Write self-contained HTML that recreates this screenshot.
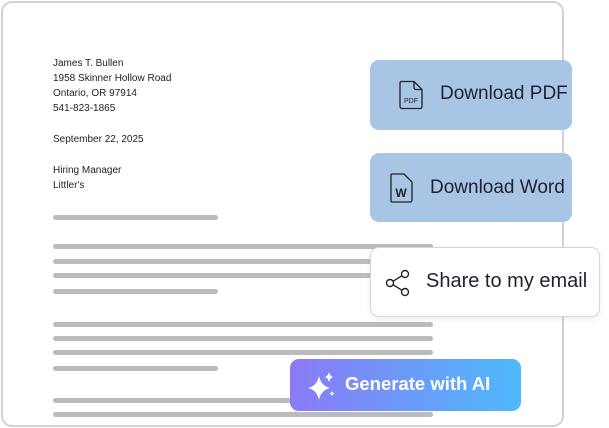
<!DOCTYPE html>
<html><head><style>
*{margin:0;padding:0;box-sizing:border-box}
body{width:609px;height:428px;background:#fff;position:relative;overflow:hidden;font-family:"Liberation Sans",sans-serif}
.paper{position:absolute;left:1px;top:1px;width:563px;height:426px;border:2px solid #d3d3d3;border-radius:11px;background:#fff}
.t{position:absolute;left:53px;font-size:10px;color:#222}
.bar{position:absolute;left:53px;height:5px;border-radius:3px;background:#bbb}
.btn{position:absolute;border-radius:9px;display:flex;align-items:center;font-size:19px;color:#1e2230}
.blue{background:#a8c5e6}
</style></head><body>
<div class="paper"></div>
<div class="t" style="top:58px">James T. Bullen</div>
<div class="t" style="top:73px">1958 Skinner Hollow Road</div>
<div class="t" style="top:88px">Ontario, OR 97914</div>
<div class="t" style="top:103px">541-823-1865</div>
<div class="t" style="top:134px">September 22, 2025</div>
<div class="t" style="top:165px">Hiring Manager</div>
<div class="t" style="top:180px">Littler's</div>
<div class="bar" style="top:215px;width:165px"></div>
<div class="bar" style="top:244px;width:380px"></div>
<div class="bar" style="top:259px;width:380px"></div>
<div class="bar" style="top:273px;width:380px"></div>
<div class="bar" style="top:289px;width:165px"></div>
<div class="bar" style="top:322px;width:380px"></div>
<div class="bar" style="top:336px;width:380px"></div>
<div class="bar" style="top:350px;width:380px"></div>
<div class="bar" style="top:366px;width:165px"></div>
<div class="bar" style="top:398px;width:380px"></div>
<div class="bar" style="top:412px;width:380px"></div>

<div class="btn blue" style="left:370px;top:60px;width:202px;height:70px">
<svg style="position:absolute;left:29px;top:20px" width="25" height="30" viewBox="0 0 25 30"><path d="M2 1.5h13l8 8v17a2 2 0 0 1-2 2H3a2 2 0 0 1-2-2V3.5a2 2 0 0 1 1-2z" fill="none" stroke="#222" stroke-width="1.3"/><path d="M15 1.5v6a2 2 0 0 0 2 2h6" fill="none" stroke="#222" stroke-width="1.3"/><text x="12" y="23" font-size="7" text-anchor="middle" fill="#222" font-family="Liberation Sans">PDF</text></svg>
<span style="position:absolute;left:70px;top:23px">Download PDF</span></div>

<div class="btn blue" style="left:370px;top:153px;width:202px;height:69px">
<svg style="position:absolute;left:20px;top:20px" width="24" height="30" viewBox="0 0 24 30"><path d="M2 1h12l8 8v18a2 2 0 0 1-2 2H2a1 1 0 0 1-1-1V2a1 1 0 0 1 1-1z" fill="none" stroke="#222" stroke-width="1.3"/><text x="11" y="24" font-size="12" font-weight="bold" text-anchor="middle" fill="#222" font-family="Liberation Sans">W</text></svg>
<span style="position:absolute;left:60px;top:24px">Download Word</span></div>

<div class="btn" style="left:370px;top:247px;width:230px;height:70px;background:#fff;border:1px solid #d6d6d6;box-shadow:0 2px 6px rgba(0,0,0,.08)">
<svg style="position:absolute;left:13px;top:20px" width="30" height="30" viewBox="0 0 30 30"><circle cx="21" cy="6" r="3.5" fill="none" stroke="#222" stroke-width="1.4"/><circle cx="21" cy="24" r="3.5" fill="none" stroke="#222" stroke-width="1.4"/><circle cx="6" cy="15" r="3.5" fill="none" stroke="#222" stroke-width="1.4"/><path d="M9 13.3l9-5.6M9 16.7l9 5.6" stroke="#222" stroke-width="1.4"/></svg>
<span style="position:absolute;left:55px;top:22px;font-size:20px">Share to my email</span></div>

<div class="btn" style="left:290px;top:359px;width:231px;height:52px;background:linear-gradient(90deg,#8b7af6,#4eb9fb);color:#fff">
<svg style="position:absolute;left:17px;top:12px" width="30" height="30" viewBox="0 0 30 30"><path d="M12 5 Q14 15 23 17 Q14 19 12 29 Q10 19 1 17 Q10 15 12 5z" fill="#fff"/><path d="M22 1 Q23 5 26 6 Q23 7 22 11 Q21 7 18 6 Q21 5 22 1z" fill="#fff"/><path d="M25 20 Q25.6 22 27.5 22.5 Q25.6 23 25 25 Q24.4 23 22.5 22.5 Q24.4 22 25 20z" fill="#fff"/></svg>
<span style="position:absolute;left:55px;top:14px;font-size:18.5px;font-weight:bold">Generate with AI</span></div>
</body></html>
